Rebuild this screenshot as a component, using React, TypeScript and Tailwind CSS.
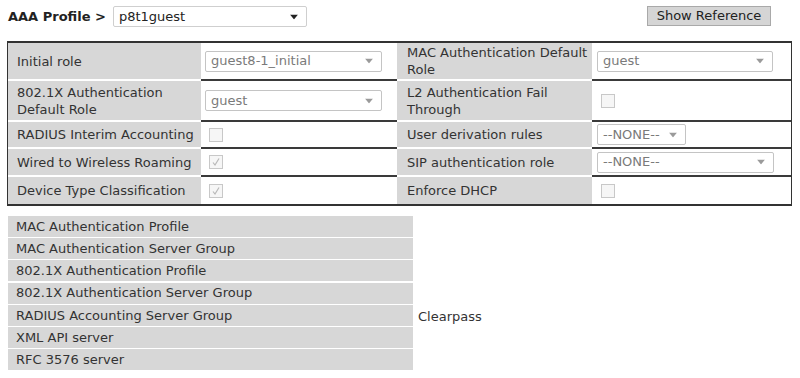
import React from "react";

const font = { fontFamily: '"DejaVu Sans", Verdana, sans-serif' };

function Sel({ text, w, dark }: { text: string; w: number; dark?: boolean }) {
  return (
    <div
      className={`relative flex items-center h-[21px] bg-white border ${dark ? "border-[#cfcfcf]" : "border-[#c4c4c4]"} rounded-[2px]`}
      style={{ width: w }}
    >
      <span className={`pl-[5px] text-[13px] ${dark ? "text-[#222]" : "text-[#7a7a7a]"}`}>{text}</span>
      <svg
        className="absolute right-[8px] top-1/2 -translate-y-1/2"
        width="8"
        height="5"
        viewBox="0 0 8 5"
      >
        <path d="M0 0 L8 0 L4 5 Z" fill={dark ? "#222" : "#9a9a9a"} />
      </svg>
    </div>
  );
}

function Check({ checked }: { checked?: boolean }) {
  return (
    <div className="w-[14px] h-[14px] border border-[#c8c8c8] bg-[#f6f6f6] flex items-center justify-center">
      {checked && (
        <svg width="10" height="10" viewBox="0 0 10 10">
          <path d="M2 5.5 L4 8 L8 1.5" stroke="#b8b8b8" strokeWidth="1.2" fill="none" />
        </svg>
      )}
    </div>
  );
}

function Label({ children, w, last, pl }: { children: React.ReactNode; w: number; last?: boolean; pl: number }) {
  return (
    <div
      className={`bg-[#d7d7d7] flex items-center whitespace-nowrap leading-[17px] ${last ? "" : "border-b-2 border-white"}`}
      style={{ width: w, paddingLeft: pl }}
    >
      {children}
    </div>
  );
}

function Value({ children, w, last, pl }: { children: React.ReactNode; w: number; last?: boolean; pl: number }) {
  return (
    <div
      className={`bg-white flex items-center ${last ? "" : "border-b-2 border-[#3a3a3a]"}`}
      style={{ width: w, paddingLeft: pl }}
    >
      {children}
    </div>
  );
}

export default function App() {
  const rows: { h: number; l1: React.ReactNode; v1: React.ReactNode; l2: React.ReactNode; v2: React.ReactNode }[] = [
    {
      h: 38,
      l1: "Initial role",
      v1: <Sel text="guest8-1_initial" w={177} />,
      l2: (
        <span>
          MAC Authentication Default
          <br />
          Role
        </span>
      ),
      v2: <Sel text="guest" w={176} />,
    },
    {
      h: 41,
      l1: (
        <span>
          802.1X Authentication
          <br />
          Default Role
        </span>
      ),
      v1: <Sel text="guest" w={177} />,
      l2: (
        <span>
          L2 Authentication Fail
          <br />
          Through
        </span>
      ),
      v2: <Check />,
    },
    {
      h: 27,
      l1: "RADIUS Interim Accounting",
      v1: <Check />,
      l2: "User derivation rules",
      v2: <Sel text="--NONE--" w={89} />,
    },
    {
      h: 28,
      l1: "Wired to Wireless Roaming",
      v1: <Check checked />,
      l2: "SIP authentication role",
      v2: <Sel text="--NONE--" w={177} />,
    },
    {
      h: 27,
      l1: "Device Type Classification",
      v1: <Check checked />,
      l2: "Enforce DHCP",
      v2: <Check />,
    },
  ];

  const lower = [
    "MAC Authentication Profile",
    "MAC Authentication Server Group",
    "802.1X Authentication Profile",
    "802.1X Authentication Server Group",
    "RADIUS Accounting Server Group",
    "XML API server",
    "RFC 3576 server",
  ];

  return (
    <div className="w-[800px] h-[378px] bg-white text-[13px] text-[#333] overflow-hidden" style={font}>
      <div className="flex items-start pt-[6px] pl-[8px] pr-[29px]">
        <div className="flex items-center">
          <span className="font-bold text-[13px] text-[#222] mr-[7px]">AAA Profile &gt;</span>
          <Sel text="p8t1guest" w={194} dark />
        </div>
        <div className="ml-auto h-[20px] w-[124px] bg-[#d5d5d5] border border-[#a9a9a9] flex items-center justify-center text-[13px] text-[#222]">
          Show Reference
        </div>
      </div>

      <div className="ml-[7px] mt-[14px] w-[785px] border-t-2 border-l border-r border-b-2 border-[#333]">
        {rows.map((r, i) => {
          const last = i === rows.length - 1;
          return (
            <div key={i} className="flex" style={{ height: r.h }}>
              <Label w={193} last={last} pl={9}>{r.l1}</Label>
              <Value w={196} last={last} pl={(r.v1 as any).type === Check ? 8 : 4}>
                {r.v1}
              </Value>
              <Label w={195} last={last} pl={10}>{r.l2}</Label>
              <Value w={199} last={last} pl={(r.v2 as any).type === Check ? 9 : 5}>
                {r.v2}
              </Value>
            </div>
          );
        })}
      </div>

      <div className="mt-[10px] ml-[8px] flex items-start">
        <div className="w-[405px] flex flex-col">
          {lower.map((t) => (
            <div key={t} className="h-[21px] mb-[1.2px] bg-[#d7d7d7] flex items-center pl-[8px]">
              {t}
            </div>
          ))}
        </div>
        <div className="ml-[5px] mt-[90px] h-[21px] flex items-center">Clearpass</div>
      </div>
    </div>
  );
}
